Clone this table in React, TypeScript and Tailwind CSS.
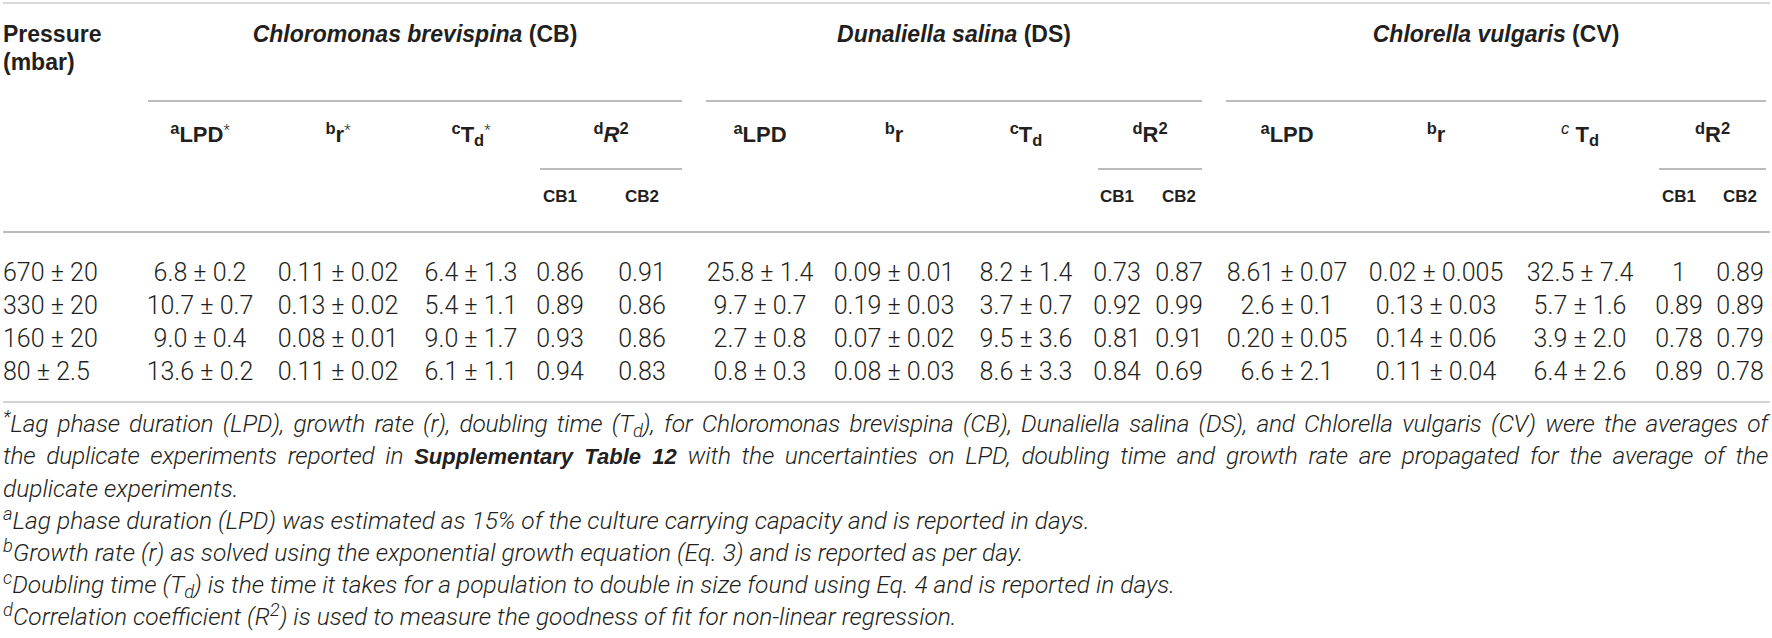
const rows = [
  ["670 ± 20", "6.8 ± 0.2", "0.11 ± 0.02", "6.4 ± 1.3", "0.86", "0.91", "25.8 ± 1.4", "0.09 ± 0.01", "8.2 ± 1.4", "0.73", "0.87", "8.61 ± 0.07", "0.02 ± 0.005", "32.5 ± 7.4", "1", "0.89"],
  ["330 ± 20", "10.7 ± 0.7", "0.13 ± 0.02", "5.4 ± 1.1", "0.89", "0.86", "9.7 ± 0.7", "0.19 ± 0.03", "3.7 ± 0.7", "0.92", "0.99", "2.6 ± 0.1", "0.13 ± 0.03", "5.7 ± 1.6", "0.89", "0.89"],
  ["160 ± 20", "9.0 ± 0.4", "0.08 ± 0.01", "9.0 ± 1.7", "0.93", "0.86", "2.7 ± 0.8", "0.07 ± 0.02", "9.5 ± 3.6", "0.81", "0.91", "0.20 ± 0.05", "0.14 ± 0.06", "3.9 ± 2.0", "0.78", "0.79"],
  ["80 ± 2.5", "13.6 ± 0.2", "0.11 ± 0.02", "6.1 ± 1.1", "0.94", "0.83", "0.8 ± 0.3", "0.08 ± 0.03", "8.6 ± 3.3", "0.84", "0.69", "6.6 ± 2.1", "0.11 ± 0.04", "6.4 ± 2.6", "0.89", "0.78"],
]

const star = <sup className="font-[Roboto,sans-serif] font-light text-[15px]">*</sup>

function Sub({ top, rowSpan = 2 }: { top: React.ReactNode; rowSpan?: number }) {
  return (
    <th rowSpan={rowSpan} className="p-0 align-top">
      <div className="pt-[19px] text-[22px] leading-[28px] font-bold text-center">{top}</div>
    </th>
  )
}

function Rep({ label }: { label: string }) {
  return (
    <th className="p-0 align-top">
      <div className="h-[61px] pt-[16px] text-[17px] leading-[22px] font-bold text-center">{label}</div>
    </th>
  )
}

export default function App() {
  return (
    <div className="w-[1772px] h-[638px] overflow-hidden bg-white pl-[3px] text-[#231f20] font-['Liberation_Sans',Arial,sans-serif]">
      <div className="mt-[2px] w-[1767px] border-t-2 border-[#d9d9d9]" />

      <table className="table-fixed border-separate border-spacing-0 w-[1767px]">
        <colgroup>
          <col className="w-[133px]" />
          <col className="w-[128px]" />
          <col className="w-[148px]" />
          <col className="w-[118px]" />
          <col className="w-[60px]" />
          <col className="w-[104px]" />
          <col className="w-[132px]" />
          <col className="w-[136px]" />
          <col className="w-[128px]" />
          <col className="w-[54px]" />
          <col className="w-[70px]" />
          <col className="w-[146px]" />
          <col className="w-[152px]" />
          <col className="w-[136px]" />
          <col className="w-[62px]" />
          <col className="w-[60px]" />
        </colgroup>
        <thead>
          <tr>
            <th rowSpan={3} className="p-0 align-top">
              <div className="pt-[16px] text-left text-[23px] leading-[28px] font-bold">
                Pressure
                <br />
                (mbar)
              </div>
            </th>
            <th colSpan={5} className="p-0 align-top">
              <div className="h-[98px] mx-[12px] pt-[16px] border-b-2 border-[#bcbcbc] text-center text-[23px] leading-[28px] font-bold">
                <i>Chloromonas brevispina</i> (CB)
              </div>
            </th>
            <th colSpan={5} className="p-0 align-top">
              <div className="h-[98px] mx-[12px] pt-[16px] border-b-2 border-[#bcbcbc] text-center text-[23px] leading-[28px] font-bold">
                <i>Dunaliella salina</i> (DS)
              </div>
            </th>
            <th colSpan={5} className="p-0 align-top">
              <div className="h-[98px] ml-[12px] mr-[4px] pt-[16px] border-b-2 border-[#bcbcbc] text-center text-[23px] leading-[28px] font-bold">
                <i>Chlorella vulgaris</i> (CV)
              </div>
            </th>
          </tr>
          <tr>
            <Sub top={<><sup>a</sup>LPD{star}</>} />
            <Sub top={<><sup>b</sup>r{star}</>} />
            <Sub top={<><sup>c</sup>T<sub>d</sub>{star}</>} />
            <th colSpan={2} className="p-0 align-top">
              <div className="h-[68px] ml-[10px] mr-[12px] pt-[19px] border-b-2 border-[#bcbcbc] text-center text-[22px] leading-[28px] font-bold">
                <sup>d</sup><i>R</i><sup>2</sup>
              </div>
            </th>
            <Sub top={<><sup>a</sup>LPD</>} />
            <Sub top={<><sup>b</sup>r</>} />
            <Sub top={<><sup>c</sup>T<sub>d</sub></>} />
            <th colSpan={2} className="p-0 align-top">
              <div className="h-[68px] ml-[8px] mr-[12px] pt-[19px] border-b-2 border-[#bcbcbc] text-center text-[22px] leading-[28px] font-bold">
                <sup>d</sup>R<sup>2</sup>
              </div>
            </th>
            <Sub top={<><sup>a</sup>LPD</>} />
            <Sub top={<><sup>b</sup>r</>} />
            <Sub top={<><sup className="italic font-normal">c</sup> T<sub>d</sub></>} />
            <th colSpan={2} className="p-0 align-top">
              <div className="h-[68px] ml-[11px] mr-[4px] pt-[19px] border-b-2 border-[#bcbcbc] text-center text-[22px] leading-[28px] font-bold">
                <sup>d</sup>R<sup>2</sup>
              </div>
            </th>
          </tr>
          <tr>
            <Rep label="CB1" />
            <Rep label="CB2" />
            <Rep label="CB1" />
            <Rep label="CB2" />
            <Rep label="CB1" />
            <Rep label="CB2" />
          </tr>
          <tr>
            <td colSpan={16} className="p-0">
              <div className="h-[2px] bg-[#bcbcbc]" />
            </td>
          </tr>
        </thead>
        <tbody className="font-[Roboto,sans-serif] font-light text-[25px]">
          {rows.map((row, i) => (
            <tr key={row[0]}>
              {row.map((v, j) => (
                <td key={j} className="p-0 whitespace-nowrap">
                  <div className={`${i === 0 ? "pt-[23px]" : ""} leading-[33px] ${j === 0 ? "text-left" : "text-center"}`}>
                    {v}
                  </div>
                </td>
              ))}
            </tr>
          ))}
        </tbody>
      </table>

      <div className="mt-[13px] w-[1767px] border-t-2 border-[#d2d2d2]" />

      {/* footnotes */}
      <div className="mt-[5px] w-[1765px] font-[Roboto,sans-serif] font-light italic text-[24.5px] leading-[32px]">
        <div className="whitespace-nowrap tracking-[-0.2px] text-justify [text-align-last:justify]">
          <sup>*</sup>Lag phase duration (LPD), growth rate (r), doubling time (T<sub>d</sub>), for Chloromonas brevispina (CB), Dunaliella salina (DS), and Chlorella vulgaris (CV) were the averages of
        </div>
        <div className="whitespace-nowrap tracking-[-0.2px] text-justify [text-align-last:justify]">
          the duplicate experiments reported in{" "}
          <span className="font-['Liberation_Sans',Arial,sans-serif] font-bold text-[22px] tracking-normal">Supplementary Table 12</span> with the
          uncertainties on LPD, doubling time and growth rate are propagated for the average of the
        </div>
        <div>duplicate experiments.</div>
        <div>
          <sup>a</sup>Lag phase duration (LPD) was estimated as 15% of the culture carrying capacity and is reported in days.
        </div>
        <div>
          <sup>b</sup>Growth rate (r) as solved using the exponential growth equation (Eq. 3) and is reported as per day.
        </div>
        <div>
          <sup>c</sup>Doubling time (T<sub>d</sub>) is the time it takes for a population to double in size found using Eq. 4 and is reported in days.
        </div>
        <div>
          <sup>d</sup>Correlation coefficient (R<sup>2</sup>) is used to measure the goodness of fit for non-linear regression.
        </div>
      </div>
    </div>
  )
}
